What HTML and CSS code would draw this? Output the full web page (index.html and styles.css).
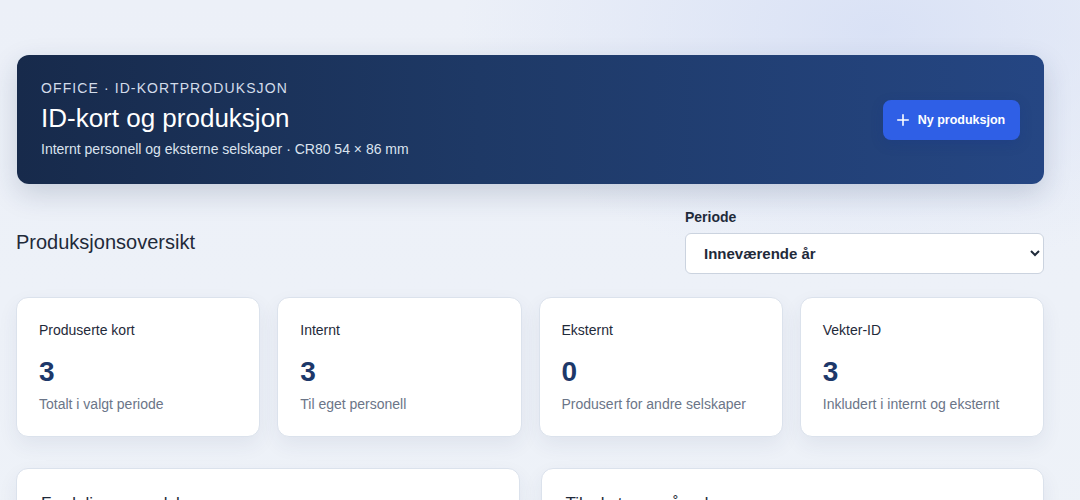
FILE: index.html
```html
<!DOCTYPE html>
<html lang="no">
<head>
<meta charset="utf-8">
<link rel="stylesheet" href="styles.css">
</head>
<body>
<div class="page">
  <header class="hero">
    <div class="hero-text">
      <div class="eyebrow">Office · ID-kortproduksjon</div>
      <h1 class="hero-title">ID-kort og produksjon</h1>
      <div class="hero-sub">Internt personell og eksterne selskaper · CR80 54 × 86 mm</div>
    </div>
    <button class="btn-primary" type="button">
      <svg class="btn-icon" viewBox="0 0 16 16" width="14" height="14"><path d="M8 2v12M2 8h12" stroke="currentColor" stroke-width="1.8" stroke-linecap="round" fill="none"/></svg>
      <span>Ny produksjon</span>
    </button>
  </header>

  <section class="overview-head">
    <h2 class="section-title">Produksjonsoversikt</h2>
    <div class="period">
      <label class="period-label" for="periode">Periode</label>
      <select id="periode" class="period-select">
        <option>Inneværende år</option>
      </select>
    </div>
  </section>

  <section class="stats">
    <div class="stat-card">
      <div class="stat-label">Produserte kort</div>
      <div class="stat-value">3</div>
      <div class="stat-desc">Totalt i valgt periode</div>
    </div>
    <div class="stat-card">
      <div class="stat-label">Internt</div>
      <div class="stat-value">3</div>
      <div class="stat-desc">Til eget personell</div>
    </div>
    <div class="stat-card">
      <div class="stat-label">Eksternt</div>
      <div class="stat-value">0</div>
      <div class="stat-desc">Produsert for andre selskaper</div>
    </div>
    <div class="stat-card">
      <div class="stat-label">Vekter-ID</div>
      <div class="stat-value">3</div>
      <div class="stat-desc">Inkludert i internt og eksternt</div>
    </div>
  </section>

  <section class="panels">
    <div class="panel"><h3 class="panel-title">Fordeling per selskap</h3></div>
    <div class="panel"><h3 class="panel-title">Tilvekst per måned</h3></div>
  </section>
</div>
</body>
</html>
```

FILE: styles.css
```css
* { box-sizing: border-box; }
html, body { margin: 0; padding: 0; }
body {
  font-family: "Liberation Sans", Arial, sans-serif;
  color: #1f2a3a;
  background:
    radial-gradient(ellipse 420px 240px at 880px 30px, rgba(214,223,245,0.85), rgba(214,223,245,0) 100%),
    linear-gradient(180deg, #ecf0f8 0%, #eef2f8 100%);
  min-height: 500px;
  overflow: hidden;
}
.page {
  width: 1028px;
  margin-left: 16px;
  padding-top: 55px;
}
.hero {
  height: 129px;
  margin-left: 1px;
  border-radius: 12px;
  background: linear-gradient(90deg, #172a4b 0%, #1e3966 45%, #254683 100%);
  box-shadow: 0 10px 28px rgba(30, 50, 90, 0.18);
  padding: 0 24px 0 24px;
  display: flex;
  align-items: center;
  justify-content: space-between;
  color: #fff;
}
.hero-text { padding-bottom: 2px; }
.eyebrow {
  text-transform: uppercase;
  font-size: 14px;
  letter-spacing: 1.1px;
  color: #d3dcea;
  line-height: 18px;
}
.hero-title {
  margin: 5px 0 0;
  font-size: 26px;
  font-weight: 400;
  line-height: 32px;
  color: #ffffff;
}
.hero-sub {
  margin-top: 6px;
  font-size: 14px;
  line-height: 18px;
  color: #dbe3ef;
}
.btn-primary {
  display: inline-flex;
  align-items: center;
  justify-content: center;
  gap: 8px;
  height: 40px;
  width: 137px;
  padding: 0 4px 0 2px;
  border: 0;
  border-radius: 8px;
  background: #2f5fe6;
  color: #fff;
  font-family: "Liberation Sans", Arial, sans-serif;
  font-weight: 700;
  font-size: 12.5px;
  white-space: nowrap;
  box-shadow: 0 4px 12px rgba(20, 50, 140, 0.25);
}
.btn-icon { flex: none; }

.overview-head {
  display: flex;
  justify-content: space-between;
  align-items: center;
  margin-top: 24px;
}
.section-title {
  margin: 0;
  font-size: 20px;
  font-weight: 400;
  color: #1f2a3a;
  padding-top: 2px;
}
.period {
  width: 359px;
  display: flex;
  flex-direction: column;
}
.period-label {
  font-size: 14px;
  font-weight: 700;
  color: #1f2a3a;
  line-height: 18px;
  margin-bottom: 7px;
}
.period-select {
  height: 41px;
  border: 1px solid #cbd3df;
  border-radius: 6px;
  background: #fff;
  padding: 0 10px 0 14px;
  font-family: "Liberation Sans", Arial, sans-serif;
  font-size: 15px;
  font-weight: 700;
  color: #1f2a3a;
}

.stats {
  margin-top: 23px;
  display: grid;
  grid-template-columns: repeat(4, 1fr);
  gap: 17px;
}
.stat-card {
  height: 140px;
  background: #fff;
  border: 1px solid #dbe2ec;
  border-radius: 12px;
  box-shadow: 0 8px 20px rgba(40, 60, 100, 0.07);
  padding: 23px 22px 0 22px;
}
.stat-label {
  font-size: 14px;
  line-height: 18px;
  color: #1f2a3a;
}
.stat-value {
  margin-top: 17px;
  font-size: 28px;
  font-weight: 700;
  line-height: 32px;
  color: #1d386a;
}
.stat-desc {
  margin-top: 7px;
  font-size: 14px;
  line-height: 18px;
  color: #6b7588;
}

.panels {
  margin-top: 31px;
  display: grid;
  grid-template-columns: 1fr 1fr;
  gap: 21px;
}
.panel {
  height: 120px;
  background: #fff;
  border: 1px solid #dbe2ec;
  border-radius: 12px;
  box-shadow: 0 8px 20px rgba(40, 60, 100, 0.07);
  padding: 24px 24px;
}
.panel-title {
  margin: 0;
  font-size: 17px;
  font-weight: 400;
  color: #1f2a3a;
  line-height: 22px;
}
```
